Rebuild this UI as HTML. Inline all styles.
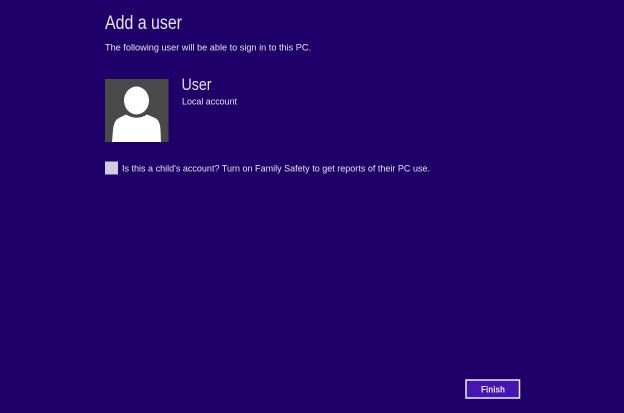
<!DOCTYPE html>
<html>
<head>
<meta charset="utf-8">
<style>
html,body{margin:0;padding:0;width:624px;height:413px;overflow:hidden;background:#1f0068;}
svg{display:block;}
text{font-family:"Liberation Sans",sans-serif;fill:#e6e2f1;}
</style>
</head>
<body>
<svg width="624" height="413" viewBox="0 0 624 413" xmlns="http://www.w3.org/2000/svg">
<defs><filter id="b" x="-5%" y="-5%" width="110%" height="110%"><feGaussianBlur stdDeviation="0.3"/></filter></defs>
<rect width="624" height="413" fill="#1f0068"/>
<g filter="url(#b)">
<text x="105" y="29" font-size="19" textLength="77" lengthAdjust="spacingAndGlyphs" fill="#fff">Add a user</text>
<text x="105" y="50.5" font-size="9.5" textLength="206" lengthAdjust="spacingAndGlyphs">The following user will be able to sign in to this PC.</text>
<rect x="105" y="79" width="63.5" height="63" fill="#4a4a4a"/>
<ellipse cx="136.5" cy="100.5" rx="12.5" ry="14" fill="#fff"/>
<path d="M112 142 L113 130 Q114 120 119 118 L126 114.5 Q136.5 121 147 114.5 L155 118 Q160 120 160.5 130 L161 142 Z" fill="#fff"/>
<text x="181.5" y="90" font-size="17" textLength="30" lengthAdjust="spacingAndGlyphs" fill="#e8e4f2">User</text>
<text x="182" y="104.5" font-size="9.5" textLength="55" lengthAdjust="spacingAndGlyphs">Local account</text>
<rect x="105" y="161.5" width="13" height="13" fill="#cfcbe3"/>
<text x="122" y="171.7" font-size="9.5" textLength="308" lengthAdjust="spacingAndGlyphs">Is this a child's account? Turn on Family Safety to get reports of their PC use.</text>
<rect x="466" y="380" width="53.5" height="18" fill="#4617b0" stroke="#eeeaf6" stroke-width="1.5"/>
<text x="481" y="392.3" font-size="9.5" font-weight="bold" textLength="24" lengthAdjust="spacingAndGlyphs">Finish</text>
</g>
</svg>
</body>
</html>
